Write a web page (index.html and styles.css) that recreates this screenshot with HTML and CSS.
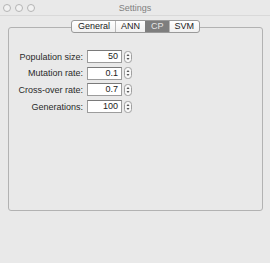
FILE: index.html
```html
<!DOCTYPE html>
<html lang="en">
  <head>
    <meta charset="UTF-8" />
    <title>Settings</title>
    <link rel="stylesheet" href="styles.css">
  </head>
  <body>
    <div class="window">
      <div class="titlebar">
        <div class="lights">
          <span class="light"></span>
          <span class="light"></span>
          <span class="light"></span>
        </div>
        <div class="title">Settings</div>
        <div></div>
      </div>
      <div class="content">
        <div class="tabs">
          <span class="tab">General</span>
          <span class="tab">ANN</span>
          <span class="tab active">CP</span>
          <span class="tab">SVM</span>
        </div>
        <div class="group">
          <div class="form">
            <label class="label">Population size:</label>
            <span class="field">50</span>
            <svg class="stepper" width="8" height="12" viewBox="0 0 8 12"><rect x="0.5" y="0.5" width="7" height="11" rx="3" fill="#f7f7f7" stroke="#a0a0a0"/><path d="M4 3 L5.5 5 H2.5 Z M4 9 L5.5 7 H2.5 Z" fill="#555"/></svg>

            <label class="label">Mutation rate:</label>
            <span class="field">0.1</span>
            <svg class="stepper" width="8" height="12" viewBox="0 0 8 12"><rect x="0.5" y="0.5" width="7" height="11" rx="3" fill="#f7f7f7" stroke="#a0a0a0"/><path d="M4 3 L5.5 5 H2.5 Z M4 9 L5.5 7 H2.5 Z" fill="#555"/></svg>

            <label class="label">Cross-over rate:</label>
            <span class="field">0.7</span>
            <svg class="stepper" width="8" height="12" viewBox="0 0 8 12"><rect x="0.5" y="0.5" width="7" height="11" rx="3" fill="#f7f7f7" stroke="#a0a0a0"/><path d="M4 3 L5.5 5 H2.5 Z M4 9 L5.5 7 H2.5 Z" fill="#555"/></svg>

            <label class="label">Generations:</label>
            <span class="field">100</span>
            <svg class="stepper" width="8" height="12" viewBox="0 0 8 12"><rect x="0.5" y="0.5" width="7" height="11" rx="3" fill="#f7f7f7" stroke="#a0a0a0"/><path d="M4 3 L5.5 5 H2.5 Z M4 9 L5.5 7 H2.5 Z" fill="#555"/></svg>
          </div>
        </div>
      </div>
    </div>
  </body>
</html>
```
FILE: styles.css
```css
body {
  margin: 0;
  background: #fff;
  font-family: "Liberation Sans", Arial, sans-serif;
  font-size: 9px;
  color: #222;
}

.window {
  width: 270px;
  height: 263px;
  background-color: #e9e9e9;
  background-image: radial-gradient(circle, #f1f1f1 0.6px, transparent 0.7px);
  background-size: 4px 4px;
}

.titlebar {
  height: 15px;
  display: grid;
  grid-template-columns: 1fr auto 1fr;
  align-items: center;
  border-bottom: 1px solid #d9d9d9;
}

.lights {
  display: flex;
  gap: 4px;
  padding-left: 3px;
}

.light {
  width: 6px;
  height: 6px;
  border: 1px solid #b4b4b4;
  border-radius: 50%;
  background: #f2f2f2;
}

.title {
  color: #808080;
  font-size: 9px;
}

.content {
  padding: 4px 7px 0 8px;
}

.tabs {
  display: flex;
  width: max-content;
  margin: 0 auto -6px;
  position: relative;
  z-index: 1;
  background: linear-gradient(#ffffff, #f0f0f0);
  border: 1px solid #9a9a9a;
  border-radius: 3px;
  height: 11px;
}

.tab {
  padding: 0 5px;
  line-height: 11px;
  border-left: 1px solid #b8b8b8;
  color: #1a1a1a;
}

.tab:first-child {
  border-left: none;
  padding-left: 6px;
}

.tab.active {
  background: #7e7e7e;
  color: #e6e6e6;
  border-left-color: #7e7e7e;
}

.group {
  height: 184px;
  border: 1px solid #b2b2b2;
  border-radius: 3px;
  box-sizing: border-box;
  padding: 22px 0 0 2px;
}

.form {
  display: grid;
  grid-template-columns: 74px 35px 8px;
  column-gap: 2px;
  row-gap: 3.7px;
  align-items: center;
}

.label {
  text-align: right;
  padding-right: 2px;
  color: #2a2a2a;
}

.field {
  height: 11px;
  line-height: 11px;
  border: 1px solid #9c9c9c;
  border-top-color: #7a7a7a;
  background: #fff;
  text-align: right;
  padding-right: 3px;
  box-sizing: content-box;
  width: 30px;
}

.stepper {
  display: block;
}
```
